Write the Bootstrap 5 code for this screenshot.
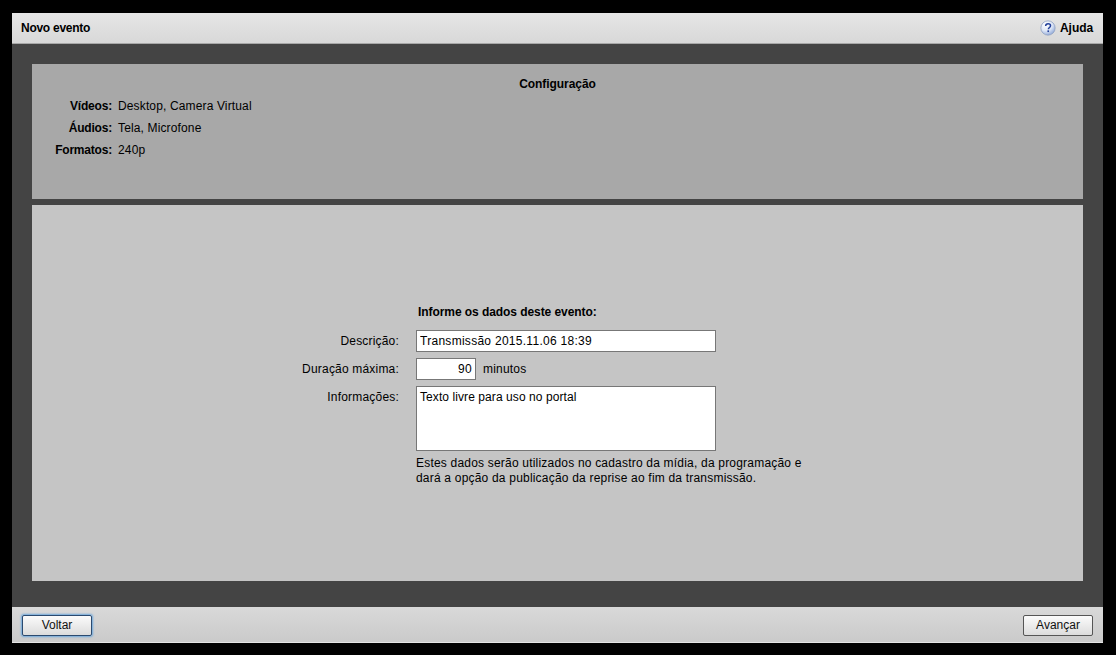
<!DOCTYPE html>
<html lang="pt-BR">
<head>
<meta charset="utf-8">
<title>Novo evento</title>
<link href="https://cdn.jsdelivr.net/npm/bootstrap@5.3.0/dist/css/bootstrap.min.css" rel="stylesheet">
<style>
html,body{height:100%;}
body{background:#000;font-family:"Liberation Sans",Arial,sans-serif;font-size:12px;line-height:16px;color:#000;padding:13px 13px 12px 12px;overflow:hidden;letter-spacing:.19px;}
.fw-bold{letter-spacing:-.07px;}
.win{height:630px;}
.topbar{height:31px;flex:none;background:linear-gradient(#e6e6e6,#d8d8d8);border-bottom:1px solid #a8a8a8;padding:0 10px 0 9px;}
.title-txt{letter-spacing:-.27px;}
.helpico{width:16px;height:16px;display:block;}
.stage{background:#444;padding:20px 20px 26px;gap:6px;min-height:0;}
.cfg{height:135px;flex:none;background:#a8a8a8;padding:12px 0 0;}
.cfg-title{text-align:center;height:16px;margin-bottom:6px;}
.cfg-grid{display:grid;grid-template-columns:80px 1fr;column-gap:6px;row-gap:6px;}
.cfg-grid dt{text-align:right;font-weight:700;margin:0;letter-spacing:-.2px;}
.cfg-grid dd{margin:0;letter-spacing:.14px;}
.formpanel{background:#c5c5c5;min-height:0;}
.formgrid{display:grid;grid-template-columns:117px 417px;column-gap:17px;row-gap:6px;margin-top:4px;}
.formgrid label{text-align:right;margin:0;padding-top:3px;color:#000;}
.heading{grid-column:2;padding-left:2px;height:20px;margin-bottom:0;}
.form-control.fld{border:1px solid #777;border-radius:0;padding:2px 3px;font-size:12px;line-height:16px;letter-spacing:.28px;color:#000;background:#fff;box-shadow:none;width:300px;height:22px;font-family:inherit;}
.form-control.fld.short{width:60px;text-align:right;}
textarea.form-control.fld{height:65px;min-height:65px;resize:none;letter-spacing:.08px;}
.unit-txt{margin-left:3px;}
.note{grid-column:2;margin-top:-1px;line-height:15px;letter-spacing:.2px;}
.bottombar{height:36px;flex:none;background:linear-gradient(#d9d9d9,#cacaca);border-bottom:1px solid #e4e4e4;padding:1px 10px 0;}
.btn.act{width:70px;height:21px;padding:0;font-size:12px;line-height:19px;color:#111;border:1px solid #555;border-radius:2px;background:linear-gradient(#fbfbfb,#dcdcdc);}
.btn.act.foc{border-color:#2b4a6f;box-shadow:0 0 2px 1px #6fa8dc;}
</style>
</head>
<body>
<div class="win d-flex flex-column">
  <div class="topbar d-flex align-items-center justify-content-between">
    <span class="fw-bold title-txt">Novo evento</span>
    <span class="d-flex align-items-center gap-1 fw-bold">
      <svg class="helpico" viewBox="0 0 17 17" aria-hidden="true">
        <defs><radialGradient id="hg" cx="35%" cy="25%" r="80%"><stop offset="0" stop-color="#ffffff"/><stop offset=".55" stop-color="#dfe7f6"/><stop offset="1" stop-color="#8fa8d8"/></radialGradient></defs>
        <circle cx="8.5" cy="8.5" r="7.6" fill="url(#hg)" stroke="#8c9dbf" stroke-width=".8"/>
        <path d="M6 6.4c0-1.5 1.1-2.4 2.6-2.4s2.6.8 2.6 2.1c0 1-.6 1.5-1.3 2-.7.4-1 .8-1 1.6" fill="none" stroke="#23409a" stroke-width="1.6"/>
        <rect x="7.9" y="11" width="1.7" height="1.8" fill="#23409a"/>
      </svg>
      Ajuda
    </span>
  </div>
  <div class="stage flex-grow-1 d-flex flex-column">
    <div class="cfg">
      <div class="cfg-title fw-bold">Configuração</div>
      <dl class="cfg-grid m-0">
        <dt>Vídeos:</dt><dd>Desktop, Camera Virtual</dd>
        <dt>Áudios:</dt><dd>Tela, Microfone</dd>
        <dt>Formatos:</dt><dd>240p</dd>
      </dl>
    </div>
    <div class="formpanel flex-grow-1 d-flex align-items-center justify-content-center">
      <form class="formgrid">
        <div class="heading fw-bold">Informe os dados deste evento:</div>
        <label for="d1">Descrição:</label>
        <div><input id="d1" class="form-control fld" value="Transmissão 2015.11.06 18:39"></div>
        <label for="d2">Duração máxima:</label>
        <div class="d-flex align-items-center gap-1"><input id="d2" class="form-control fld short" value="90"><span class="unit-txt">minutos</span></div>
        <label for="d3">Informações:</label>
        <div><textarea id="d3" class="form-control fld d-block">Texto livre para uso no portal</textarea></div>
        <div class="note">Estes dados serão utilizados no cadastro da mídia, da programação e<br>dará a opção da publicação da reprise ao fim da transmissão.</div>
      </form>
    </div>
  </div>
  <div class="bottombar d-flex align-items-center justify-content-between">
    <button type="button" class="btn act foc">Voltar</button>
    <button type="button" class="btn act">Avançar</button>
  </div>
</div>
<script src="https://cdn.jsdelivr.net/npm/bootstrap@5.3.0/dist/js/bootstrap.bundle.min.js"></script>
</body>
</html>
